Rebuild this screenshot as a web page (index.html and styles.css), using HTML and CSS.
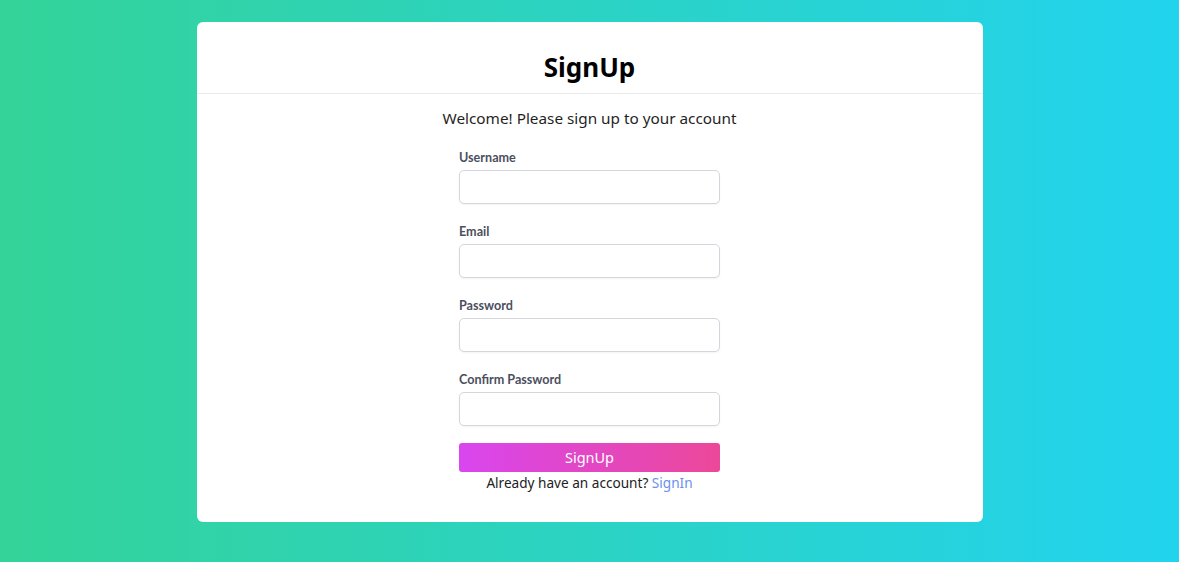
FILE: index.html
```html
<!DOCTYPE html>
<html lang="en">
<head>
<meta charset="utf-8">
<title>SignUp</title>
<link rel="stylesheet" href="styles.css">
</head>
<body>
<main class="page">
  <section class="card">
    <header class="card-header">
      <h1 class="title">SignUp</h1>
    </header>
    <p class="welcome">Welcome! Please sign up to your account</p>
    <form class="form">
      <div class="field">
        <label class="label" for="username">Username</label>
        <input class="input" id="username" type="text">
      </div>
      <div class="field">
        <label class="label" for="email">Email</label>
        <input class="input" id="email" type="email">
      </div>
      <div class="field">
        <label class="label" for="password">Password</label>
        <input class="input" id="password" type="password">
      </div>
      <div class="field">
        <label class="label" for="confirm">Confirm Password</label>
        <input class="input" id="confirm" type="password">
      </div>
      <button class="btn" type="button">SignUp</button>
      <p class="footer">Already have an account? <a class="link" href="#">SignIn</a></p>
    </form>
  </section>
</main>
</body>
</html>
```

FILE: styles.css
```css
* { box-sizing: border-box; }
html, body { margin: 0; padding: 0; }
body {
  font-family: "Noto Sans", "Open Sans", sans-serif;
  background: linear-gradient(to right, #34d399, #22d3ee);
  min-height: 562px;
}
.page {
  display: flex;
  justify-content: center;
  padding-top: 22px;
}
.card {
  width: 786px;
  background: #fff;
  border-radius: 6px;
  padding-bottom: 28px;
}
.card-header {
  padding: 28px 0 8px;
  border-bottom: 1px solid #ececec;
  text-align: center;
}
.title {
  margin: 0;
  font-size: 26px;
  line-height: 35px;
  font-weight: 700;
  color: #000;
}
.welcome {
  margin: 12px 0 0;
  text-align: center;
  font-size: 15.3px;
  line-height: 24px;
  color: #1f1f1f;
}
.form {
  width: 261px;
  margin: 20px auto 0;
  display: flex;
  flex-direction: column;
}
.field {
  display: flex;
  flex-direction: column;
  gap: 4px;
  margin-bottom: 20px;
}
.field:last-of-type { margin-bottom: 17px; }
.label {
  font-family: Lato, "Noto Sans", sans-serif;
  font-size: 12.6px;
  line-height: 16px;
  font-weight: 700;
  color: #4b5060;
}
.input {
  height: 34px;
  border: 1px solid #d4d6db;
  border-radius: 5px;
  box-shadow: 0 1px 2px rgba(0,0,0,0.05);
  font: inherit;
  padding: 0 10px;
  background: #fff;
}
.btn {
  height: 29px;
  border: 0;
  border-radius: 3px;
  background: linear-gradient(to right, #d946ef, #ec4899);
  color: #fff;
  font-family: inherit;
  font-size: 14.5px;
  line-height: 29px;
  padding: 0;
}
.footer {
  margin: 0;
  text-align: center;
  font-size: 13.6px;
  line-height: 22px;
  color: #222;
}
.link {
  color: #6b8ff0;
  text-decoration: none;
}
```
